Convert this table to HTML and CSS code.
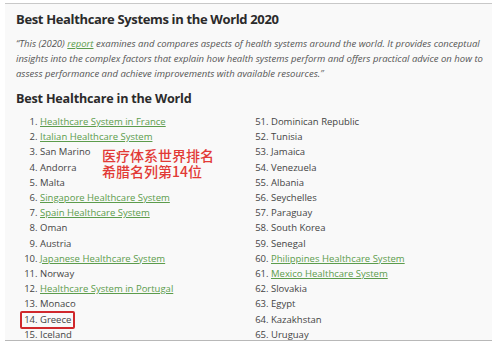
FILE: index.html
```html
<!DOCTYPE html>
<html>
<head>
<meta charset="utf-8">
<link rel="stylesheet" href="styles.css">
</head>
<body>
<div class="page">
  <h1 class="title">Best Healthcare Systems in the World 2020</h1>
  <p class="quote">“This (2020) <a href="#">report</a> examines and compares aspects of health systems around the world. It provides conceptual insights into the complex factors that explain how health systems perform and offers practical advice on how to assess performance and achieve improvements with available resources.”</p>
  <h2 class="subtitle">Best Healthcare in the World</h2>
  <div class="cols">
    <ol class="rank">
      <li><a href="#">Healthcare System in France</a></li>
      <li><a href="#">Italian Healthcare System</a></li>
      <li>San Marino</li>
      <li>Andorra</li>
      <li>Malta</li>
      <li><a href="#">Singapore Healthcare System</a></li>
      <li><a href="#">Spain Healthcare System</a></li>
      <li>Oman</li>
      <li>Austria</li>
      <li><a href="#">Japanese Healthcare System</a></li>
      <li>Norway</li>
      <li><a href="#">Healthcare System in Portugal</a></li>
      <li>Monaco</li>
      <li class="marked"><span class="box"></span>Greece</li>
      <li>Iceland</li>
    </ol>
    <ol class="rank" start="51">
      <li>Dominican Republic</li>
      <li>Tunisia</li>
      <li>Jamaica</li>
      <li>Venezuela</li>
      <li>Albania</li>
      <li>Seychelles</li>
      <li>Paraguay</li>
      <li>South Korea</li>
      <li>Senegal</li>
      <li><a href="#">Philippines Healthcare System</a></li>
      <li><a href="#">Mexico Healthcare System</a></li>
      <li>Slovakia</li>
      <li>Egypt</li>
      <li>Kazakhstan</li>
      <li>Uruguay</li>
    </ol>
    <div class="note">医疗体系世界排名<br>希腊名列第14位</div>
  </div>
</div>
</body>
</html>
```
FILE: styles.css
```css
html, body {
  margin: 0;
  padding: 0;
  background: #ffffff;
}
body {
  width: 500px;
  height: 348px;
  overflow: hidden;
  font-family: "Open Sans", "Noto Sans", sans-serif;
  color: #444;
}
.page {
  margin: 3px 8px 0 5px;
  border-top: 1px solid #c8c8c8;
  border-bottom: 1px solid #b8b8b8;
  background: #f9f9f9;
  padding: 6px 0 0 11px;
  height: 338px;
  box-sizing: border-box;
}
.title {
  margin: 0;
  font-size: 13px;
  letter-spacing: -0.35px;
  font-weight: 700;
  color: #2b2b2b;
  line-height: 18px;
}
.quote {
  margin: 8px 0 0 0;
  font-style: italic;
  font-size: 9.5px;
  line-height: 15px;
  color: #555;
  width: 478px;
}
.quote a {
  color: #5c9c4c;
}
.subtitle {
  margin: 9px 0 0 0;
  font-size: 12.6px;
  letter-spacing: -0.2px;
  font-weight: 700;
  color: #2b2b2b;
  line-height: 18px;
}
.cols {
  position: relative;
  display: grid;
  grid-template-columns: 231px 1fr;
  margin-top: 6px;
}
.rank {
  margin: 0;
  padding: 0 0 0 24px;
  font-size: 9.5px;
  line-height: 15.2px;
  color: #444;
}
.rank li::marker {
  color: #444;
}
.rank a {
  color: #5c9c4c;
  text-decoration: underline;
}
.marked {
  position: relative;
}
.box {
  position: absolute;
  left: -20px;
  top: -1px;
  width: 51px;
  height: 14px;
  border: 2px solid #d0282c;
  border-radius: 2px;
}
.note {
  position: absolute;
  left: 86px;
  top: 33px;
  font-family: "Noto Sans CJK SC", sans-serif;
  font-size: 14px;
  font-weight: 500;
  line-height: 16px;
  color: #e23a36;
}
```
